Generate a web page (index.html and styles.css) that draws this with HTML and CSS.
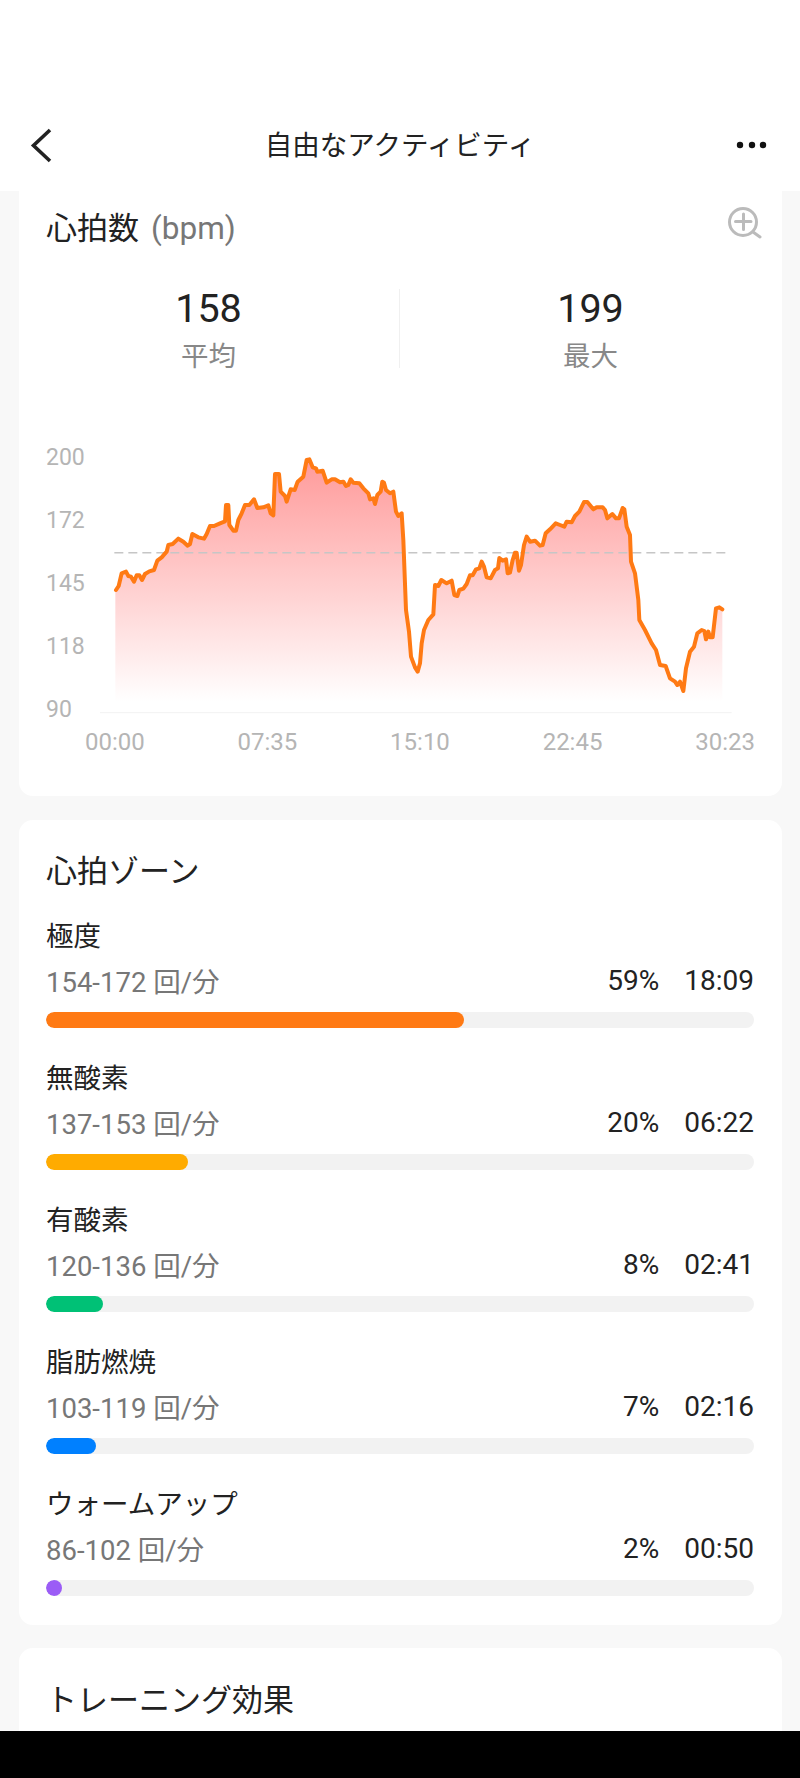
FILE: index.html
```html
<!DOCTYPE html>
<html lang="ja">
<head>
<meta charset="utf-8">
<title>自由なアクティビティ</title>
<link rel="stylesheet" href="styles.css">
</head>
<body>
<div class="screen">
  <header class="app-header">
    <svg class="nav-icon" viewBox="0 0 40 40"><path class="back-stroke" d="M20 4 L3.5 19.5 L20 35"/></svg>
    <h1 class="nav-title">自由なアクティビティ</h1>
    <svg class="nav-icon" viewBox="0 0 40 40"><circle class="dot" cx="10" cy="19" r="3.2"/><circle class="dot" cx="22" cy="19" r="3.2"/><circle class="dot" cx="33" cy="19" r="3.2"/></svg>
  </header>
  <main class="content">
    <section class="card card-chart">
      <div class="title-row">
        <h2 class="card-title">心拍数<span class="unit">(bpm)</span></h2>
        <svg class="zoom-icon" viewBox="0 0 34 34"><circle class="zoom-stroke" cx="15" cy="17" r="13.5"/><path class="zoom-stroke" d="M7.5 16.5 H23 M15.5 9 V24.5 M25 27 L32 32"/></svg>
      </div>
      <div class="stats">
        <div class="stat"><div class="stat-value">158</div><div class="stat-label">平均</div></div>
        <div class="stat-divider"></div>
        <div class="stat"><div class="stat-value">199</div><div class="stat-label">最大</div></div>
      </div>
      <div class="chart">
        <div class="y-axis"><span>200</span><span>172</span><span>145</span><span>118</span><span>90</span></div>
        <svg class="plot" viewBox="240 42 1962 837">
          <defs>
            <linearGradient id="hr-fill" gradientUnits="userSpaceOnUse" x1="0" y1="90" x2="0" y2="815">
              <stop offset="0" stop-color="#ff9a9a"/>
              <stop offset="1" stop-color="#ffffff"/>
            </linearGradient>
          </defs>
          <path class="axis-line" d="M240 848 H2135"/>
          <path class="hr-area" d="M286 480 L296 468 L305 430 L318 425 L325 438 L333 440 L342 455 L350 436 L358 436 L366 450 L375 432 L388 424 L402 420 L412 392 L425 382 L440 365 L445 345 L458 342 L475 326 L490 335 L503 347 L510 342 L517 312 L535 322 L552 326 L560 312 L570 288 L582 288 L600 280 L615 274 L618 225 L625 225 L628 285 L640 302 L648 302 L655 270 L665 250 L675 225 L688 225 L702 208 L712 234 L730 232 L745 226 L752 250 L760 256 L765 132 L777 132 L782 185 L795 198 L800 215 L812 178 L824 180 L833 155 L850 140 L860 90 L868 88 L878 112 L888 115 L892 125 L908 122 L920 158 L935 148 L945 148 L960 157 L970 155 L978 168 L985 165 L992 148 L1000 158 L1018 160 L1030 175 L1045 190 L1050 208 L1060 205 L1065 222 L1072 195 L1082 185 L1087 155 L1092 158 L1098 180 L1110 190 L1120 185 L1128 245 L1135 258 L1145 250 L1150 330 L1158 540 L1167 605 L1173 680 L1185 712 L1193 725 L1200 700 L1205 640 L1212 600 L1225 570 L1240 553 L1245 465 L1255 468 L1264 450 L1280 460 L1295 452 L1303 495 L1312 498 L1318 480 L1330 476 L1340 462 L1350 436 L1358 436 L1368 418 L1378 415 L1385 395 L1392 410 L1400 442 L1412 445 L1425 420 L1434 415 L1438 384 L1448 392 L1458 388 L1463 430 L1470 428 L1478 390 L1485 368 L1490 368 L1497 422 L1503 405 L1512 345 L1520 320 L1530 335 L1545 332 L1560 347 L1568 345 L1577 310 L1590 298 L1607 280 L1620 285 L1633 290 L1640 275 L1655 277 L1665 258 L1678 245 L1692 216 L1702 216 L1720 238 L1730 232 L1748 232 L1755 240 L1762 265 L1777 252 L1788 265 L1797 265 L1808 234 L1813 238 L1820 290 L1830 315 L1833 395 L1845 430 L1855 510 L1858 570 L1875 600 L1895 640 L1908 660 L1920 705 L1937 708 L1950 745 L1965 755 L1972 765 L1980 755 L1990 783 L1998 715 L2010 665 L2022 650 L2032 610 L2045 600 L2053 603 L2058 628 L2065 605 L2070 622 L2078 622 L2088 535 L2098 532 L2107 538 V815 H286 Z"/>
          <path class="avg-line" d="M283 368 H2118"/>
          <path class="hr-line" d="M288 480 L296 468 L305 430 L318 425 L325 438 L333 440 L342 455 L350 436 L358 436 L366 450 L375 432 L388 424 L402 420 L412 392 L425 382 L440 365 L445 345 L458 342 L475 326 L490 335 L503 347 L510 342 L517 312 L535 322 L552 326 L560 312 L570 288 L582 288 L600 280 L615 274 L618 225 L625 225 L628 285 L640 302 L648 302 L655 270 L665 250 L675 225 L688 225 L702 208 L712 234 L730 232 L745 226 L752 250 L760 256 L765 132 L777 132 L782 185 L795 198 L800 215 L812 178 L824 180 L833 155 L850 140 L860 90 L868 88 L878 112 L888 115 L892 125 L908 122 L920 158 L935 148 L945 148 L960 157 L970 155 L978 168 L985 165 L992 148 L1000 158 L1018 160 L1030 175 L1045 190 L1050 208 L1060 205 L1065 222 L1072 195 L1082 185 L1087 155 L1092 158 L1098 180 L1110 190 L1120 185 L1128 245 L1135 258 L1145 250 L1150 330 L1158 540 L1167 605 L1173 680 L1185 712 L1193 725 L1200 700 L1205 640 L1212 600 L1225 570 L1240 553 L1245 465 L1255 468 L1264 450 L1280 460 L1295 452 L1303 495 L1312 498 L1318 480 L1330 476 L1340 462 L1350 436 L1358 436 L1368 418 L1378 415 L1385 395 L1392 410 L1400 442 L1412 445 L1425 420 L1434 415 L1438 384 L1448 392 L1458 388 L1463 430 L1470 428 L1478 390 L1485 368 L1490 368 L1497 422 L1503 405 L1512 345 L1520 320 L1530 335 L1545 332 L1560 347 L1568 345 L1577 310 L1590 298 L1607 280 L1620 285 L1633 290 L1640 275 L1655 277 L1665 258 L1678 245 L1692 216 L1702 216 L1720 238 L1730 232 L1748 232 L1755 240 L1762 265 L1777 252 L1788 265 L1797 265 L1808 234 L1813 238 L1820 290 L1830 315 L1833 395 L1845 430 L1855 510 L1858 570 L1875 600 L1895 640 L1908 660 L1920 705 L1937 708 L1950 745 L1965 755 L1972 765 L1980 755 L1990 783 L1998 715 L2010 665 L2022 650 L2032 610 L2045 600 L2053 603 L2058 628 L2065 605 L2070 622 L2078 622 L2088 535 L2098 532 L2107 538"/>
        </svg>
      </div>
      <div class="x-axis"><span>00:00</span><span>07:35</span><span>15:10</span><span>22:45</span><span>30:23</span></div>
    </section>

    <section class="card card-zones">
      <h2 class="card-title">心拍ゾーン</h2>
      <div class="zone">
        <div class="zone-name">極度</div>
        <div class="zone-row"><span class="zone-range">154-172 回/分</span><span class="zone-values"><span>59%</span><span class="zone-time">18:09</span></span></div>
        <div class="track"><div class="fill fill-peak" style="width:59%"></div></div>
      </div>
      <div class="zone">
        <div class="zone-name">無酸素</div>
        <div class="zone-row"><span class="zone-range">137-153 回/分</span><span class="zone-values"><span>20%</span><span class="zone-time">06:22</span></span></div>
        <div class="track"><div class="fill fill-anaerobic" style="width:20%"></div></div>
      </div>
      <div class="zone">
        <div class="zone-name">有酸素</div>
        <div class="zone-row"><span class="zone-range">120-136 回/分</span><span class="zone-values"><span>8%</span><span class="zone-time">02:41</span></span></div>
        <div class="track"><div class="fill fill-aerobic" style="width:8%"></div></div>
      </div>
      <div class="zone">
        <div class="zone-name">脂肪燃焼</div>
        <div class="zone-row"><span class="zone-range">103-119 回/分</span><span class="zone-values"><span>7%</span><span class="zone-time">02:16</span></span></div>
        <div class="track"><div class="fill fill-fat" style="width:7%"></div></div>
      </div>
      <div class="zone">
        <div class="zone-name">ウォームアップ</div>
        <div class="zone-row"><span class="zone-range">86-102 回/分</span><span class="zone-values"><span>2%</span><span class="zone-time">00:50</span></span></div>
        <div class="track"><div class="fill fill-warm" style="width:2.3%"></div></div>
      </div>
    </section>

    <section class="card card-effect">
      <h2 class="card-title">トレーニング効果</h2>
    </section>
  </main>
  <div class="nav-bar"></div>
</div>
</body>
</html>
```

FILE: styles.css
```css
* { box-sizing: border-box; }
html, body { margin: 0; padding: 0; }
body {
  background: #f8f8f8;
  font-family: Roboto, "Noto Sans CJK JP", sans-serif;
  color: #222;
}
.screen {
  width: 800px;
  height: 1778px;
  display: flex;
  flex-direction: column;
  overflow: hidden;
}
.app-header {
  flex: none;
  height: 191px;
  padding: 100px 30px 0;
  background: #fff;
  display: flex;
  justify-content: space-between;
  align-items: center;
}
.nav-icon { width: 40px; height: 40px; flex: none; }
.back-stroke { fill: none; stroke: #222; stroke-width: 3.6; }
.dot { fill: #111; }
.nav-title { margin: 0; font-size: 27.5px; font-weight: 400; line-height: 40px; color: #222; }
.content {
  flex: 1;
  min-height: 0;
  overflow: hidden;
  padding: 0 18px 0 19px;
  display: flex;
  flex-direction: column;
  gap: 24px;
}
.card {
  flex: none;
  background: #fff;
  border-radius: 14px;
  padding: 0 28px 0 27px;
}
.card-chart {
  border-radius: 0 0 14px 14px;
  padding-top: 17px;
  padding-bottom: 39px;
}
.card-zones { padding-top: 31px; padding-bottom: 29px; }
.card-effect { margin-top: -1px; padding-top: 32px; height: 110px; }
.title-row { display: flex; justify-content: space-between; align-items: flex-start; margin-right: -8px; }
.card-title { margin: 0; font-size: 31px; font-weight: 400; line-height: 42px; color: #222; }
.unit { color: #777; font-size: 31.5px; margin-left: 12px; }
.zoom-icon { width: 34px; height: 34px; margin-top: -3px; flex: none; }
.zoom-stroke { fill: none; stroke: #bbb; stroke-width: 3; stroke-linecap: round; }
.stats {
  display: grid;
  grid-template-columns: 1fr 1px 1fr;
  align-items: start;
  margin: 39px -27px 0 -28px;
  text-align: center;
}
.stat-value { font-size: 39.5px; line-height: 40px; color: #222; }
.stat-label { font-size: 27.5px; line-height: 38px; margin-top: 9px; color: #888; }
.stat-divider { height: 79px; background: #f0f0f0; }
.chart { display: flex; margin-top: 68px; height: 279px; }
.y-axis {
  flex: none;
  width: 54px;
  display: flex;
  flex-direction: column;
  justify-content: space-between;
  padding-top: 1px;
  font-size: 23px;
  line-height: 26px;
  color: #b5b5b5;
}
.plot { display: block; width: 654px; height: 279px; flex: none; }
.axis-line { fill: none; stroke: #f2f2f2; stroke-width: 3; }
.hr-area { fill: url(#hr-fill); stroke: none; }
.avg-line { fill: none; stroke: #c6c6c6; stroke-width: 4.5; stroke-dasharray: 27 15; }
.hr-line { fill: none; stroke: #ff7a14; stroke-width: 12; stroke-linejoin: round; stroke-linecap: round; }
.x-axis {
  display: flex;
  justify-content: space-between;
  margin: 4px -1px 0 0;
  padding-left: 39px;
  font-size: 24px;
  line-height: 30px;
  color: #b5b5b5;
}
.card-zones .zone:first-of-type { margin-top: 25px; }
.zone { margin-top: 32px; }
.zone-name { font-size: 27.5px; line-height: 38px; color: #222; }
.zone-row { display: flex; justify-content: space-between; margin-top: 8px; line-height: 38px; font-size: 27.5px; }
.zone-range { color: #777; }
.zone-values { display: flex; gap: 25px; font-size: 28px; color: #222; position: relative; top: -2px; }
.track { margin-top: 10px; height: 16px; border-radius: 8px; background: #f2f2f2; overflow: hidden; }
.fill { height: 100%; border-radius: 8px; }
.fill-peak { background: #ff7a14; }
.fill-anaerobic { background: #ffab00; }
.fill-aerobic { background: #00c176; }
.fill-fat { background: #0080ff; }
.fill-warm { background: #9b5cf6; }
.nav-bar { flex: none; height: 47px; background: #000; }
```
